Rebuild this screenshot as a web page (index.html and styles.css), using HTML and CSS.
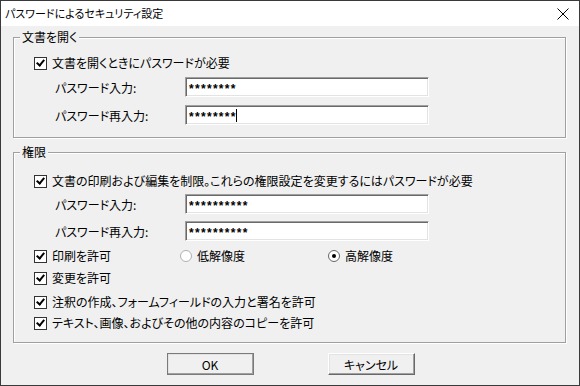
FILE: index.html
```html
<!DOCTYPE html>
<html lang="ja">
<head>
    <meta charset="UTF-8">
    <title>パスワードによるセキュリティ設定</title>
    <link rel="stylesheet" href="styles.css">
</head>
<body>
    <div class="window">
        <div class="titlebar">
            <span class="title">パスワードによるセキュリティ設定</span>
            <svg class="close" width="12" height="12" viewBox="0 0 12 12">
                <path d="M0.5 0.5 L11.5 11.5 M11.5 0.5 L0.5 11.5" stroke="#000" stroke-width="1" fill="none"/>
            </svg>
        </div>
        <div class="content">
            <div class="group group-open">
                <span class="legend">文書を開く</span>
                <div class="row check-row">
                    <span class="checkbox checked"></span>
                    <span class="label-text">文書を開くときにパスワードが必要</span>
                </div>
                <div class="row field-row">
                    <span class="field-label">パスワード入力:</span>
                    <div class="textbox"><span class="stars">********</span></div>
                </div>
                <div class="row field-row second">
                    <span class="field-label">パスワード再入力:</span>
                    <div class="textbox"><span class="stars">********</span><span class="caret"></span></div>
                </div>
            </div>

            <div class="group group-perm">
                <span class="legend">権限</span>
                <div class="row check-row">
                    <span class="checkbox checked"></span>
                    <span class="label-text">文書の印刷および編集を制限。これらの権限設定を変更するにはパスワードが必要</span>
                </div>
                <div class="row field-row">
                    <span class="field-label">パスワード入力:</span>
                    <div class="textbox"><span class="stars">**********</span></div>
                </div>
                <div class="row field-row second">
                    <span class="field-label">パスワード再入力:</span>
                    <div class="textbox"><span class="stars">**********</span></div>
                </div>
                <div class="row check-row print-row">
                    <span class="checkbox checked"></span>
                    <span class="label-text print-label">印刷を許可</span>
                    <span class="radio"></span>
                    <span class="label-text radio-label">低解像度</span>
                    <span class="radio selected"></span>
                    <span class="label-text">高解像度</span>
                </div>
                <div class="row check-row opt-row">
                    <span class="checkbox checked"></span>
                    <span class="label-text">変更を許可</span>
                </div>
                <div class="row check-row opt-row">
                    <span class="checkbox checked"></span>
                    <span class="label-text">注釈の作成、フォームフィールドの入力と署名を許可</span>
                </div>
                <div class="row check-row opt-row last">
                    <span class="checkbox checked"></span>
                    <span class="label-text">テキスト、画像、およびその他の内容のコピーを許可</span>
                </div>
            </div>

            <div class="buttons">
                <button class="btn default">OK</button>
                <button class="btn">キャンセル</button>
            </div>
        </div>
    </div>
</body>
</html>
```

FILE: styles.css
```css
html, body {
    margin: 0;
    padding: 0;
}
body {
    background: #f0f0f0;
    font-family: "Noto Sans CJK JP", "Liberation Sans", sans-serif;
    font-size: 12px;
    color: #000;
}
.window {
    width: 580px;
    height: 386px;
    box-sizing: border-box;
    border: 1px solid #3a3a3a;
    background: #f0f0f0;
    display: flex;
    flex-direction: column;
}
.titlebar {
    height: 25px;
    background: #fff;
    display: flex;
    align-items: center;
    justify-content: space-between;
    padding: 0 10px 0 4px;
    flex: none;
}
.title {
    font-size: 11px;
    font-feature-settings: "palt";
    line-height: 1;
}
.close {
    display: block;
}
.content {
    padding: 11px 13px 0 12px;
}
.group {
    position: relative;
    border: 1px solid #a0a0a0;
    box-shadow: inset 1px 1px 0 #fff, 1px 1px 0 #fff;
    display: flex;
    flex-direction: column;
}
.legend {
    position: absolute;
    top: -9px;
    left: 6px;
    padding: 0 2px;
    background: #f0f0f0;
    line-height: 16px;
    font-feature-settings: "palt";
}
.group-open {
    height: 101px;
    box-sizing: border-box;
    padding-top: 17px;
}
.group-perm {
    margin-top: 14px;
    height: 191px;
    box-sizing: border-box;
    padding-top: 20px;
}
.row {
    display: flex;
    align-items: center;
}
.check-row {
    height: 16px;
    padding-left: 20px;
}
.field-row {
    height: 20px;
    margin-top: 6px;
    padding-left: 41px;
}
.field-row.second {
    margin-top: 8px;
}
.group-perm .field-row {
    margin-top: 5px;
}
.group-perm .field-row.second {
    margin-top: 7px;
}
.label-text {
    margin-left: 5px;
    line-height: 16px;
    font-feature-settings: "palt";
    white-space: nowrap;
}
.field-label {
    width: 130px;
    font-feature-settings: "palt";
    white-space: nowrap;
}
.checkbox {
    width: 13px;
    height: 13px;
    box-sizing: border-box;
    border: 1px solid #333;
    background: #fff;
    position: relative;
    flex: none;
}
.checkbox.checked::after {
    content: "";
    position: absolute;
    left: 3px;
    top: 0px;
    width: 3px;
    height: 6px;
    border-right: 2px solid #000;
    border-bottom: 2px solid #000;
    transform: rotate(40deg);
}
.textbox {
    width: 244px;
    height: 20px;
    box-sizing: border-box;
    background: #fff;
    border-top: 1px solid #a0a0a0;
    border-left: 1px solid #a0a0a0;
    border-right: 1px solid #fff;
    border-bottom: 1px solid #fff;
    box-shadow: inset 1px 1px 0 #696969, inset -1px -1px 0 #e3e3e3;
    display: flex;
    align-items: center;
    padding-left: 3px;
}
.stars {
    font-family: "Liberation Sans", sans-serif;
    font-weight: bold;
    font-size: 12px;
    letter-spacing: 1.3px;
    line-height: 1;
    padding-top: 3px;
}
.caret {
    width: 1px;
    height: 13px;
    background: #000;
    margin-left: -1px;
}
.print-row {
    margin-top: 7px;
}
.print-label {
    width: 128px;
}
.radio {
    width: 12px;
    height: 12px;
    box-sizing: border-box;
    border-radius: 50%;
    border: 1px solid #b0b0b0;
    background: #fff;
    position: relative;
    flex: none;
}
.radio.selected {
    border-color: #666;
}
.radio.selected::after {
    content: "";
    position: absolute;
    left: 3px;
    top: 3px;
    width: 4px;
    height: 4px;
    border-radius: 50%;
    background: #000;
}
.radio-label {
    width: 131px;
}
.opt-row {
    margin-top: 6px;
}
.opt-row + .opt-row {
    margin-top: 8px;
}
.opt-row.last {
    margin-top: 5px;
}
.buttons {
    display: flex;
    justify-content: center;
    gap: 74px;
    margin-top: 10px;
    padding-left: 2px;
}
.btn {
    width: 87px;
    height: 22px;
    box-sizing: border-box;
    background: #f0f0f0;
    font-family: "Noto Sans CJK JP", "Liberation Sans", sans-serif;
    font-size: 12px;
    font-feature-settings: "palt";
    color: #000;
    padding: 0;
    border-top: 1px solid #fff;
    border-left: 1px solid #fff;
    border-right: 1px solid #696969;
    border-bottom: 1px solid #696969;
    box-shadow: inset -1px -1px 0 #a0a0a0, inset 1px 1px 0 #e3e3e3;
}
.btn.default {
    outline: 1px solid #7a7a7a;
    outline-offset: -1px;
    border-top-color: #a0a0a0;
    border-left-color: #a0a0a0;
}
```
